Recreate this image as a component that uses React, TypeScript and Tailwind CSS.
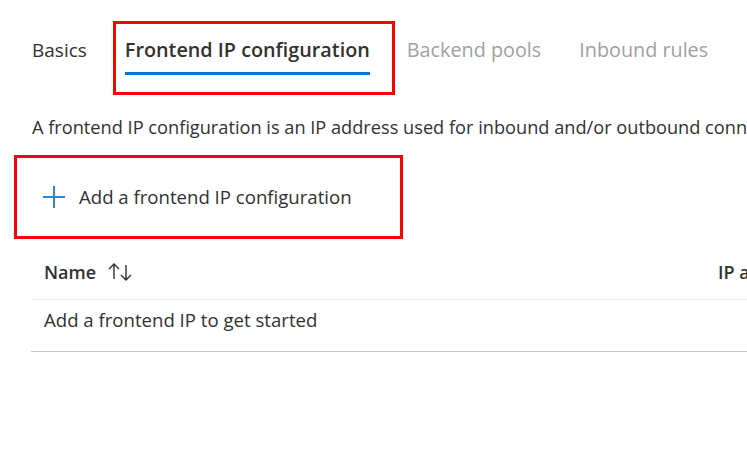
import React from 'react';

const font = { fontFamily: '"Open Sans", "Noto Sans", sans-serif' };

const PlusIcon = () => (
    <svg width="22" height="22" viewBox="0 0 22 22" fill="none">
        <path d="M11 0 V22 M0 11 H22" stroke="#2b88d8" strokeWidth="2" />
    </svg>
);

const SortIcon = () => (
    <svg width="26" height="20" viewBox="0 0 26 20" fill="none" stroke="#323130" strokeWidth="1.4">
        <path d="M7 17 V2 M2 7 L7 2 L12 7" />
        <path d="M19 3 V18 M14 13 L19 18 L24 13" />
    </svg>
);

const App: React.FC = () => {
    return (
        <div className="w-[747px] h-[453px] bg-white overflow-hidden text-[#323130]" style={font}>
            {/* tabs */}
            <div className="flex items-start pt-[21px] pl-[32px] whitespace-nowrap">
                <div className="pt-[15px] text-[19px] leading-[28px]">Basics</div>
                <div className="ml-[26px] border-[3px] border-[#ff0000] pt-[12px] pb-[17px] pl-[9px] pr-[22px] flex flex-col items-start shrink-0">
                    <span className="text-[19.8px] leading-[28px] font-semibold">Frontend IP configuration</span>
                    <span className="mt-[8px] h-[3px] w-full bg-[#0078d4]"></span>
                </div>
                <div className="ml-[12px] pt-[15px] text-[19.8px] leading-[28px] text-[#a19f9d]">Backend pools</div>
                <div className="ml-[38px] pt-[15px] text-[19.8px] leading-[28px] text-[#a19f9d]">Inbound rules</div>
            </div>

            <div className="mt-[20px] pl-[32px] text-[18.2px] leading-[24px] whitespace-nowrap overflow-hidden">
                A frontend IP configuration is an IP address used for inbound and/or outbound connectivity.
            </div>

            <div className="mt-[16px] ml-[14px] w-[389px] h-[84px] border-[3px] border-[#ff0000] flex items-center pl-[26px]">
                <PlusIcon />
                <span className="ml-[14px] text-[18.6px] leading-[24px] whitespace-nowrap">Add a frontend IP configuration</span>
            </div>

            {/* table */}
            <div className="ml-[31px] mt-[11px] leading-[24px] whitespace-nowrap">
                <div className="flex pt-[10px] pb-[15px] border-b border-[#edebe9] text-[18px]">
                    <div className="w-[674px] shrink-0 pl-[13px] flex items-center font-semibold">
                        Name
                        <span className="ml-[11px]"><SortIcon /></span>
                    </div>
                    <div className="pl-[13px] font-semibold">IP address</div>
                </div>
                <div className="pt-[8px] pb-[19px] pl-[13px] border-b border-[#c8c6c4] text-[18.6px]">
                    Add a frontend IP to get started
                </div>
            </div>
        </div>
    );
};

export default App;
